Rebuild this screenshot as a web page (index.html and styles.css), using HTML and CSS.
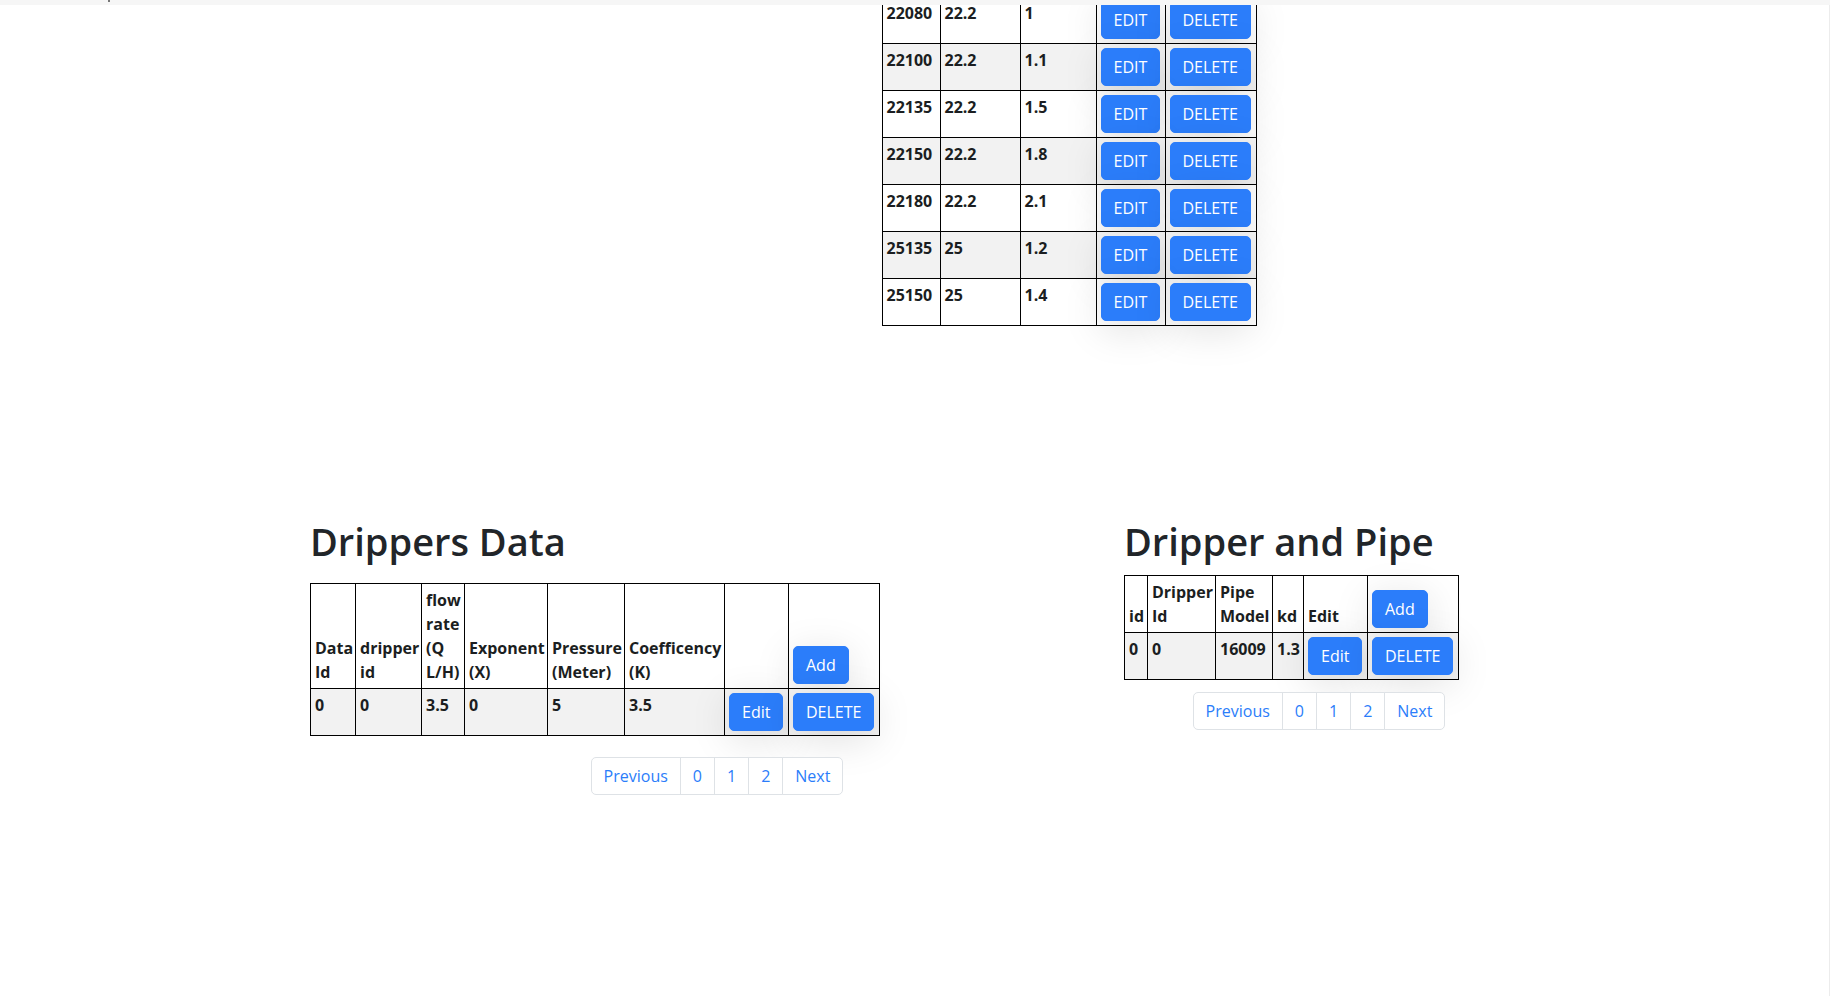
FILE: index.html
```html
<!DOCTYPE html>
<html lang="en">
<head>
<meta charset="utf-8">
<title>Drippers</title>
<link rel="stylesheet" href="styles.css">
</head>
<body>
<div class="topbar"><span class="topbar-mark"></span></div>
<div class="edge"></div>
<main class="page">
  <section class="top-section">
    <table class="data-table top-table">
      <colgroup>
        <col class="w58"><col class="w80"><col class="w76"><col class="w69"><col class="w91">
      </colgroup>
      <tbody>
        <tr><td>22080</td><td>22.2</td><td>1</td><td><button class="btn">EDIT</button></td><td><button class="btn">DELETE</button></td></tr>
        <tr><td>22100</td><td>22.2</td><td>1.1</td><td><button class="btn">EDIT</button></td><td><button class="btn">DELETE</button></td></tr>
        <tr><td>22135</td><td>22.2</td><td>1.5</td><td><button class="btn">EDIT</button></td><td><button class="btn">DELETE</button></td></tr>
        <tr><td>22150</td><td>22.2</td><td>1.8</td><td><button class="btn">EDIT</button></td><td><button class="btn">DELETE</button></td></tr>
        <tr><td>22180</td><td>22.2</td><td>2.1</td><td><button class="btn">EDIT</button></td><td><button class="btn">DELETE</button></td></tr>
        <tr><td>25135</td><td>25</td><td>1.2</td><td><button class="btn">EDIT</button></td><td><button class="btn">DELETE</button></td></tr>
        <tr><td>25150</td><td>25</td><td>1.4</td><td><button class="btn">EDIT</button></td><td><button class="btn">DELETE</button></td></tr>
      </tbody>
    </table>
  </section>

  <div class="columns">
    <section class="col col-left">
      <h1 class="title">Drippers Data</h1>
      <table class="data-table drippers-table">
        <colgroup>
          <col class="w45"><col class="w66"><col class="w43"><col class="w83"><col class="w77"><col class="w100"><col class="w64"><col class="w91">
        </colgroup>
        <thead>
          <tr>
            <th>Data Id</th>
            <th>dripper id</th>
            <th>flow rate (Q L/H)</th>
            <th>Exponent (X)</th>
            <th>Pressure (Meter)</th>
            <th>Coefficency (K)</th>
            <th></th>
            <th><button class="btn">Add</button></th>
          </tr>
        </thead>
        <tbody>
          <tr class="stripe">
            <td>0</td><td>0</td><td>3.5</td><td>0</td><td>5</td><td>3.5</td>
            <td><button class="btn">Edit</button></td>
            <td><button class="btn">DELETE</button></td>
          </tr>
        </tbody>
      </table>
      <nav class="pager pager-left">
        <ul class="pagination">
          <li><a class="page-link" href="#">Previous</a></li>
          <li><a class="page-link" href="#">0</a></li>
          <li><a class="page-link" href="#">1</a></li>
          <li><a class="page-link" href="#">2</a></li>
          <li><a class="page-link" href="#">Next</a></li>
        </ul>
      </nav>
    </section>

    <section class="col col-right">
      <h1 class="title">Dripper and Pipe</h1>
      <table class="data-table pipe-table">
        <colgroup>
          <col class="w23"><col class="w68"><col class="w57"><col class="w31"><col class="w64"><col class="w91">
        </colgroup>
        <thead>
          <tr>
            <th>id</th>
            <th>Dripper Id</th>
            <th>Pipe Model</th>
            <th>kd</th>
            <th>Edit</th>
            <th><button class="btn">Add</button></th>
          </tr>
        </thead>
        <tbody>
          <tr class="stripe">
            <td>0</td><td>0</td><td>16009</td><td>1.3</td>
            <td><button class="btn">Edit</button></td>
            <td><button class="btn">DELETE</button></td>
          </tr>
        </tbody>
      </table>
      <nav class="pager pager-right">
        <ul class="pagination">
          <li><a class="page-link" href="#">Previous</a></li>
          <li><a class="page-link" href="#">0</a></li>
          <li><a class="page-link" href="#">1</a></li>
          <li><a class="page-link" href="#">2</a></li>
          <li><a class="page-link" href="#">Next</a></li>
        </ul>
      </nav>
    </section>
  </div>
</main>
</body>
</html>
```

FILE: styles.css
```css
* { box-sizing: border-box; }

html, body {
  margin: 0;
  padding: 0;
  background: #ffffff;
}

body {
  font-family: "Open Sans", "Noto Sans", "Liberation Sans", sans-serif;
  font-size: 16px;
  line-height: 24px;
  color: #212529;
}

.topbar {
  position: fixed;
  top: 0;
  left: 0;
  right: 0;
  height: 5px;
  background: #f6f6f6;
  z-index: 10;
}

.topbar-mark {
  position: absolute;
  left: 108px;
  top: 0;
  width: 2px;
  height: 2px;
  background: #777;
}

.edge {
  position: fixed;
  top: 5px;
  right: 0;
  bottom: 0;
  width: 1px;
  background: #ececec;
  z-index: 10;
}

.page {
  padding-bottom: 120px;
}

.top-section {
  display: flex;
  justify-content: center;
  padding-left: 310px;
  padding-right: 2px;
}

.data-table {
  border-collapse: collapse;
  table-layout: fixed;
  background: #ffffff;
}

.data-table th,
.data-table td {
  border: 1px solid #000;
  padding: 4px;
  font-weight: 700;
  text-align: left;
  line-height: 24px;
  overflow: visible;
  color: #1b1e21;
}

.data-table thead th {
  vertical-align: bottom;
}

.data-table tbody td {
  vertical-align: top;
}

.top-table {
  width: 375px;
  margin-top: -4px;
}

.top-table tbody tr:nth-child(even) td,
.data-table tr.stripe td {
  background: #f2f2f2;
}

.drippers-table {
  width: 570px;
  margin-top: 18px;
}

.pipe-table {
  width: 335px;
  margin-top: 10px;
}

.w23 { width: 23px; }
.w31 { width: 31px; }
.w43 { width: 43px; }
.w45 { width: 45px; }
.w57 { width: 57px; }
.w58 { width: 58px; }
.w64 { width: 64px; }
.w66 { width: 66px; }
.w68 { width: 68px; }
.w69 { width: 69px; }
.w76 { width: 76px; }
.w77 { width: 77px; }
.w80 { width: 80px; }
.w83 { width: 83px; }
.w91 { width: 91px; }
.w100 { width: 100px; }

.btn {
  display: block;
  width: max-content;
  font-family: inherit;
  font-size: 16px;
  font-weight: 400;
  line-height: 24px;
  padding: 6px 12px;
  color: #ffffff;
  background: #2b7dfa;
  border: 1px solid #2b7dfa;
  border-radius: 5px;
  box-shadow: 0 8px 40px rgba(0, 0, 0, 0.13);
  cursor: pointer;
}

.columns {
  display: flex;
  align-items: flex-start;
  padding-left: 310px;
  margin-top: 192px;
}

.col-left {
  width: 814px;
}

.col-right {
  width: 390px;
}

.title {
  margin: 0;
  font-size: 38px;
  line-height: 47px;
  font-weight: 600;
  color: #212529;
}

.pager {
  display: flex;
  justify-content: center;
}

.pager-left { margin-top: 21px; }
.pager-right { margin-top: 12px; }

.pagination {
  display: flex;
  list-style: none;
  margin: 0;
  padding: 0;
}

.pagination li + li .page-link {
  margin-left: -1px;
}

.page-link {
  display: block;
  padding: 6px 12px;
  line-height: 24px;
  font-size: 16px;
  color: #2b7dfa;
  text-decoration: none;
  background: #ffffff;
  border: 1px solid #dee2e6;
}

.pagination li:first-child .page-link {
  border-radius: 5px 0 0 5px;
}

.pagination li:last-child .page-link {
  border-radius: 0 5px 5px 0;
}
```
